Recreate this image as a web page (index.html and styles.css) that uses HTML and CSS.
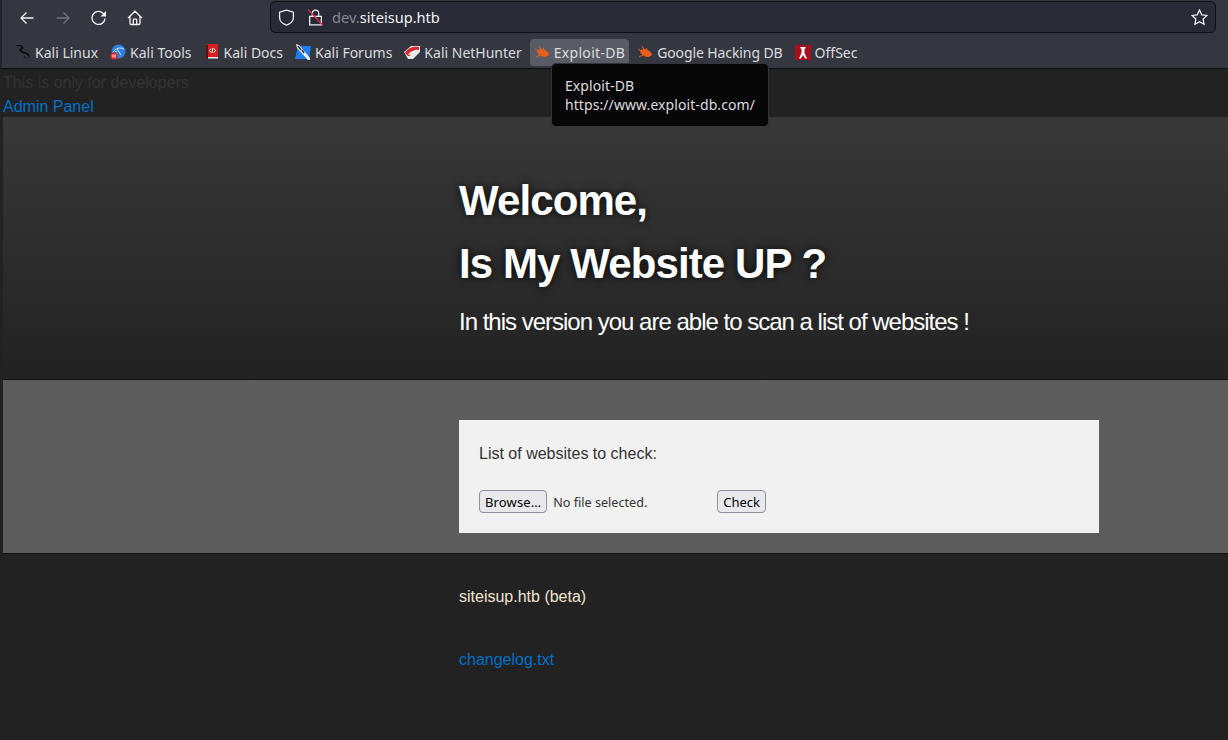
FILE: index.html
```html
<!DOCTYPE html>
<html lang="en">
<head>
    <meta charset="UTF-8">
    <title>Is My Website UP ?</title>
    <link rel="stylesheet" href="styles.css">
</head>
<body>
    <!-- Browser toolbar -->
    <div class="browser">
        <div class="navbar">
            <div class="nav-buttons">
                <svg class="nav-icon" viewBox="0 0 16 16"><path d="M14.500 8H2M7.500 2.500 2 8l5.500 5.500"/></svg>
                <svg class="nav-icon disabled" viewBox="0 0 16 16"><path d="M1.500 8H14M8.500 2.500 14 8l-5.500 5.500"/></svg>
                <svg class="nav-icon" viewBox="0 0 16 16"><path d="M14 8.500A6.500 6.500 0 1 1 12 3.200L14 5.500"/><path class="fill" d="M15 1v5.500H9.500z"/></svg>
                <svg class="nav-icon" viewBox="0 0 16 16"><path d="M1 8 8 1.200 15 8M3 6.500v6.700q0 1.300 1.300 1.300h7.400q1.300 0 1.300-1.300V6.500M6.300 14.500V10q0-.8.800-.8h1.800q.8 0 .8.800v4.500"/></svg>
            </div>
            <div class="urlbar">
                <svg class="url-icon" viewBox="0 0 16 16"><path d="M8 1 1.500 3v5c0 3.500 3 6 6.500 7.200 3.500-1.200 6.500-3.700 6.500-7.200V3z"/></svg>
                <svg class="url-icon lock" viewBox="0 0 16 16"><path d="M5 7V4a3 3 0 0 1 6 0v3M2.500 7h11v8h-11z"/><path class="slash" d="M1 .5 15 15.500"/></svg>
                <span class="url"><span class="url-dim">dev.</span>siteisup.htb</span>
                <svg class="url-icon star" viewBox="0 0 16 16"><path d="m8 1 2.100 4.500 4.900.6-3.600 3.400.9 4.900L8 12l-4.300 2.400.9-4.900L1 6.100l4.900-.6z"/></svg>
            </div>
        </div>
        <div class="bookmarks">
            <div class="bookmark">
                <svg class="favicon" viewBox="0 0 16 16"><path class="dragon" d="M0 2c3-1.500 6-1.500 8 .5 1 1 .5 2.500-1.500 3-.5 1.500 2.500 2 5 3 2.500 1 3.500 3.500 3.500 6.500-1-2-2.500-4.500-4.500-5-3-.8-6-1.500-6-4 0-1.500 2-2 2.500-3C6 2 3.500 2 0 2zM9 12c1 .5 2 1.500 3 3-1.500-.8-2.500-1.500-3.500-2z"/></svg>
                Kali Linux
            </div>
            <div class="bookmark">
                <svg class="favicon" viewBox="0 0 16 16"><circle cx="8.500" cy="7.500" r="7" fill="#2b7fe0"/><path d="M3 8c3-4 7-5 11-3M7 5l4 6M5 7l2 1" fill="none" stroke="#cfe4fb"/><circle cx="4" cy="12" r="3.600" fill="#e5262b"/><path d="M3 10.500v3M5 10.500v3" stroke="#fff"/></svg>
                Kali Tools
            </div>
            <div class="bookmark">
                <svg class="favicon" viewBox="0 0 16 16"><path fill="#d81e1e" d="M3 0h11v13H3z"/><path fill="#5b1010" d="M2 1h2v14H2z"/><path fill="#e8e8e8" d="M4 13h10v1.500H4z"/><path d="M7 4.500 5.500 6.500 7 8.500M10 4.500l1.500 2-1.500 2M9 4l-1 5" fill="none" stroke="#fff"/></svg>
                Kali Docs
            </div>
            <div class="bookmark">
                <svg class="favicon" viewBox="0 0 16 16"><path fill="#1f7ff0" d="M3 2h13l-2 13H0z"/><path d="M1 0l3 1 11 13v2h-2L2 4z" fill="#f4f4f4"/><path d="M3 2l3 4M7 6l2 3" stroke="#333" fill="none" stroke-width="1.500"/></svg>
                Kali Forums
            </div>
            <div class="bookmark">
                <svg class="favicon" viewBox="0 0 16 16"><path fill="#e8e8e8" d="M0 8l7-6h9v6l-7 7H4z"/><path fill="#d8262c" d="M1 9c2-4 7-7 14-6v3C10 5 7 8 6 12H4z"/><path fill="none" stroke="#fff" stroke-width="1.500" d="M5 11c1-3 4-4 7-2"/></svg>
                Kali NetHunter
            </div>
            <div class="bookmark hover">
                <svg class="favicon" viewBox="0 0 16 16"><use href="#bug"/></svg>
                Exploit-DB
            </div>
            <div class="bookmark tight">
                <svg class="favicon" viewBox="0 0 16 16"><g id="bug"><ellipse cx="9" cy="9" rx="6" ry="3.500" fill="#e8601c" transform="rotate(20 9 9)"/><path d="M1 5l5 3M5 2l3 5M2 13l4-2M9 4l1 2" stroke="#e8601c" fill="none"/></g></svg>
                Google Hacking DB
            </div>
            <div class="bookmark">
                <svg class="favicon" viewBox="0 0 16 16"><path fill="#a50f1e" d="M0 1h16v15H0z"/><path fill="#fff" d="M5.500 3h5v1.500h-1V9l2.500 5.500h-2L8 11l-2 3.500H4L6.500 9V4.500h-1z"/></svg>
                OffSec
            </div>
            <div class="tooltip">Exploit-DB<br>https://www.exploit-db.com/</div>
        </div>
    </div>

    <!-- Page -->
    <div class="page">
        <div class="dev-note">This is only for developers</div>
        <a class="admin-link" href="#">Admin Panel</a>
        <header class="hero">
            <div class="column">
                <h1>Welcome,<br>Is My Website UP ?</h1>
                <p class="lead">In this version you are able to scan a list of websites !</p>
            </div>
        </header>
        <section class="band">
            <div class="column">
                <form class="card">
                    <p class="card-label">List of websites to check:</p>
                    <div class="card-controls">
                        <button type="button" class="btn btn-browse">Browse…</button>
                        <span class="file-name">No file selected.</span>
                        <button type="button" class="btn">Check</button>
                    </div>
                </form>
            </div>
        </section>
        <footer class="footer">
            <div class="column">
                <p class="footer-name">siteisup.htb (beta)</p>
                <a class="changelog" href="#">changelog.txt</a>
            </div>
        </footer>
    </div>
</body>
</html>
```

FILE: styles.css
```css
* {
    box-sizing: border-box;
}
html, body {
    height: 100%;
}
body {
    margin: 0;
    background-color: #222;
    overflow: hidden;
    display: flex;
    flex-direction: column;
    font-family: "Liberation Sans", Arial, sans-serif;
}

/* Browser toolbar */
.browser {
    height: 69px;
    flex: none;
    background-color: #343640;
    border-left: 2px solid #22232b;
    border-bottom: 1px solid #0d0e12;
    font-family: "Noto Sans", sans-serif;
    color: #dcdcdf;
}
.navbar {
    height: 36px;
    display: flex;
    align-items: flex-start;
    padding-top: 1px;
}
.nav-buttons {
    width: 268px;
    display: flex;
    gap: 20px;
    padding: 9px 0 0 17px;
}
.nav-icon {
    width: 16px;
    height: 16px;
    fill: none;
    stroke: #f2f2f3;
    stroke-width: 1.300;
}
.nav-icon.disabled {
    stroke: #73747b;
}
.nav-icon .fill {
    fill: #f2f2f3;
    stroke: none;
}
.urlbar {
    width: 946px;
    height: 32px;
    display: flex;
    align-items: center;
    padding: 0 7px 0 7px;
    background-color: #282a36;
    border: 1px solid #101117;
    border-radius: 5px;
}
.url-icon {
    width: 17px;
    height: 17px;
    flex: none;
    fill: none;
    stroke: #f0f0f2;
    stroke-width: 1.200;
}
.lock {
    margin-left: 12px;
}
.slash {
    stroke: #e22850;
}
.url {
    flex: 1;
    margin-left: 8px;
    font-size: 14.600px;
    color: #f2f2f3;
}
.url-dim {
    color: #8a8b92;
}
.bookmarks {
    position: relative;
    height: 32px;
    display: flex;
    align-items: center;
    gap: 4px;
    padding: 0 0 0 9px;
    font-size: 14px;
}
.bookmark {
    height: 27px;
    display: flex;
    align-items: center;
    gap: 4px;
    padding: 0 4px;
    border-radius: 4px;
    white-space: nowrap;
}
.bookmark.hover {
    background-color: #5a5c65;
    letter-spacing: 0.300px;
}
.bookmark.tight {
    letter-spacing: -0.100px;
}
.favicon {
    width: 16px;
    height: 16px;
    flex: none;
}
.dragon {
    fill: #0c0c0c;
}
.tooltip {
    position: absolute;
    left: 549px;
    top: 27px;
    z-index: 2;
    width: 218px;
    height: 64px;
    padding: 12px 13px;
    background-color: #070708;
    border: 1px solid #33343a;
    border-radius: 5px;
    font-size: 14px;
    line-height: 19px;
    letter-spacing: 0.080px;
    white-space: nowrap;
}

/* Page */
.page {
    flex: 1;
    padding-left: 3px;
    background-color: #222;
    display: flex;
    flex-direction: column;
}
.dev-note {
    height: 24px;
    line-height: 28px;
    font-size: 16px;
    color: #333;
}
.admin-link {
    height: 24px;
    line-height: 28px;
    font-size: 16px;
    color: #0070c9;
    text-decoration: none;
}
.column {
    margin-left: 456px;
    width: 640px;
}
.hero {
    height: 263px;
    padding-top: 52px;
    background: linear-gradient(#383838, #222);
    border-bottom: 1px solid #111;
    color: #fff;
}
.hero h1 {
    margin: 0;
    font-size: 42px;
    line-height: 63px;
    font-weight: 700;
    letter-spacing: -0.900px;
    text-shadow: 0 0 8px rgba(0, 0, 0, 0.9);
}
.lead {
    margin: 9px 0 0;
    font-size: 24px;
    line-height: 36px;
    letter-spacing: -1px;
}
.band {
    height: 174px;
    padding-top: 40px;
    background-color: #5d5c5d;
    border-bottom: 1px solid #111;
}
.card {
    height: 113px;
    padding: 24px 20px 0;
    background-color: #f1f1f1;
}
.card-label {
    margin: 0;
    font-size: 16px;
    line-height: 20px;
    color: #333;
}
.card-controls {
    margin-top: 26px;
    display: flex;
    align-items: center;
    font-family: "Noto Sans", sans-serif;
    font-size: 13px;
    color: #333;
}
.btn {
    height: 23px;
    padding: 0 5px;
    background-color: #e9e9ed;
    border: 1px solid #8f8f9d;
    border-radius: 4px;
    font: inherit;
    color: #000;
}
.btn-browse {
    padding: 0 5px;
    letter-spacing: 0.150px;
}
.file-name {
    width: 164px;
    margin: 1px 0 0 6px;
    font-size: 12.600px;
}
.footer {
    flex: 1;
    padding-top: 32px;
    background-color: #222;
    font-size: 16px;
}
.footer-name {
    margin: 0;
    line-height: 22px;
    color: #f1e4d0;
}
.changelog {
    display: block;
    margin-top: 41px;
    line-height: 22px;
    color: #0070c9;
    text-decoration: none;
}
```
